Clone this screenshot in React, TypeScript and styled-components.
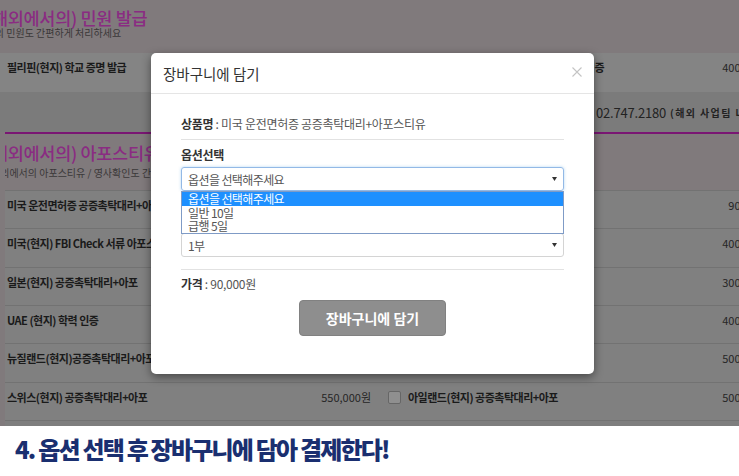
import React from "react";
import styled, { createGlobalStyle } from "styled-components";

const GlobalStyle = createGlobalStyle`
  html, body {
    margin: 0;
    padding: 0;
    background: #ffffff;
  }
  body {
    font-family: "Noto Sans CJK KR", "Noto Sans", sans-serif;
  }
`;

const Screen = styled.div`
  position: relative;
  width: 739px;
  height: 476px;
  overflow: hidden;
  background: #ffffff;
  display: flex;
  flex-direction: column;
`;

// background page (already dimmed by the modal backdrop)
const Page = styled.div`
  height: 426px;
  flex-shrink: 0;
  display: flex;
  flex-direction: column;
  background: #807a7c;
  overflow: hidden;
`;

const SectionHead = styled.div<{ $height: number; $top: number }>`
  height: ${(p) => p.$height}px;
  padding-top: ${(p) => p.$top}px;
  box-sizing: border-box;
  flex-shrink: 0;
`;

const SectionTitle = styled.div<{ $shift: number }>`
  margin-left: ${(p) => p.$shift}px;
  font-size: 17.5px;
  line-height: 18px;
  font-weight: 500;
  letter-spacing: -0.3px;
  color: #8a2c82;
  white-space: nowrap;
`;

const SectionSub = styled.div<{ $shift: number; $gap: number }>`
  margin-left: ${(p) => p.$shift}px;
  margin-top: ${(p) => p.$gap}px;
  font-size: 10px;
  line-height: 12px;
  color: #3b3839;
  white-space: nowrap;
`;

const ItemRow = styled.div<{ $shift: number; $bg: string; $height: number; $line: boolean }>`
  display: grid;
  grid-template-columns: 401px 401px;
  margin-left: ${(p) => p.$shift}px;
  height: ${(p) => p.$height}px;
  box-sizing: border-box;
  background: ${(p) => p.$bg};
  border-top: ${(p) => (p.$line ? "1px solid #727272" : "none")};
  flex-shrink: 0;
`;

const ItemCell = styled.div`
  display: flex;
  align-items: flex-start;
  padding: 7px 9px 0 8px;
  gap: 7px;
  min-width: 0;
`;

const CheckBox = styled.span`
  width: 13px;
  height: 13px;
  margin-top: 1px;
  box-sizing: border-box;
  border: 1px solid #666666;
  border-radius: 2px;
  background: #8f8f8f;
  flex-shrink: 0;
`;

const ItemName = styled.span`
  flex: 1;
  font-size: 11px;
  line-height: 15px;
  font-weight: 700;
  letter-spacing: -0.5px;
  color: #1a1a1a;
  white-space: nowrap;
  overflow: hidden;
`;

const ItemPrice = styled.span`
  font-size: 11px;
  line-height: 15px;
  color: #262626;
  white-space: nowrap;
`;

const InfoBand = styled.div`
  height: 40px;
  flex-shrink: 0;
  background: #7b7b7b;
  display: flex;
  align-items: center;
  gap: 4px;
  padding-left: 596px;
  white-space: nowrap;
`;

const Phone = styled.span`
  font-size: 13px;
  letter-spacing: -0.2px;
  color: #222222;
`;

const PhoneNote = styled.span`
  font-size: 10px;
  font-weight: 700;
  letter-spacing: 1.4px;
  color: #222222;
`;

const LowerSection = styled.div`
  flex: 1;
  margin-left: 5px;
  border-top: 2px solid #7a1673;
  display: flex;
  flex-direction: column;
  overflow: hidden;
`;

const PageFoot = styled.div`
  flex: 1;
  border-top: 1px solid #727272;
  background: #7e7e7e;
`;

const Caption = styled.div`
  flex: 1;
  display: flex;
  align-items: center;
  padding: 0 0 6px 15px;
  font-size: 24px;
  font-weight: 900;
  letter-spacing: -1.8px;
  color: #1a2f70;
`;

// modal
const Modal = styled.div`
  position: absolute;
  left: 151px;
  top: 53px;
  width: 443px;
  height: 321px;
  box-sizing: border-box;
  background: #ffffff;
  border-radius: 5px;
  box-shadow: 0 3px 10px rgba(0, 0, 0, 0.45);
  display: flex;
  flex-direction: column;
`;

const ModalHeader = styled.div`
  height: 41px;
  box-sizing: border-box;
  border-bottom: 1px solid #e5e5e5;
  display: flex;
  align-items: center;
  justify-content: space-between;
  padding: 0 12px 0 12px;
`;

const ModalTitle = styled.span`
  font-size: 14.5px;
  letter-spacing: 0px;
  color: #333333;
`;

const CloseButton = styled.svg`
  width: 10px;
  height: 10px;
  margin-top: -3px;
`;

const ModalBody = styled.div`
  padding: 23px 30px 0;
  display: flex;
  flex-direction: column;
`;

const TextLine = styled.div<{ $gap: number }>`
  margin-top: ${(p) => p.$gap}px;
  font-size: 12px;
  line-height: 14px;
  letter-spacing: -0.3px;
  color: #555555;

  b {
    color: #333333;
    font-weight: 700;
  }
`;

const Divider = styled.div<{ $gap: number }>`
  margin-top: ${(p) => p.$gap}px;
  height: 1px;
  background: #e2e2e2;
`;

const FieldLabel = styled.div<{ $top: number; $bottom: number }>`
  margin: ${(p) => p.$top}px 0 ${(p) => p.$bottom}px;
  font-size: 12px;
  line-height: 14px;
  font-weight: 700;
  letter-spacing: -0.3px;
  color: #333333;
`;

const SelectWrap = styled.div`
  position: relative;
`;

const SelectBox = styled.div<{ $focused?: boolean }>`
  height: 24px;
  box-sizing: border-box;
  border: 1px solid ${(p) => (p.$focused ? "#93b9e6" : "#d4d4d4")};
  border-radius: 3px;
  box-shadow: ${(p) => (p.$focused ? "0 0 3px rgba(102, 175, 233, 0.5)" : "none")};
  display: flex;
  align-items: center;
  justify-content: space-between;
  padding: 0 6px 0 6px;
  font-size: 12px;
  letter-spacing: -0.6px;
  color: #555555;
`;

const Caret = styled.svg`
  width: 5px;
  height: 4px;
`;

const OptionList = styled.div`
  position: absolute;
  left: 0;
  right: 0;
  top: 100%;
  z-index: 2;
  background: #ffffff;
  border: 1px solid #7f9bc6;
`;

const OptionItem = styled.div<{ $active?: boolean }>`
  height: 13.5px;
  line-height: 13.5px;
  padding-left: 6px;
  font-size: 12px;
  letter-spacing: -0.6px;
  background: ${(p) => (p.$active ? "#1e90ff" : "transparent")};
  color: ${(p) => (p.$active ? "#ffffff" : "#555555")};
`;

const CartButton = styled.button`
  align-self: center;
  margin-top: 9px;
  width: 147px;
  height: 36px;
  border: 1px solid #818181;
  border-radius: 4px;
  background: #8e8e8e;
  color: #ffffff;
  font-family: inherit;
  font-size: 14px;
  font-weight: 700;
  letter-spacing: 0px;
`;

const sectionRows = [
  ["미국 운전면허증 공증촉탁대리+아포스티유", "90,000원", "캐나다(현지) 공증촉탁대리", "90,000원"],
  ["미국(현지) FBI Check 서류 아포스티유", "400,000원", "중국(현지) 공증촉탁대리", "400,000원"],
  ["일본(현지) 공증촉탁대리+아포", "300,000원", "영국(현지) 공증촉탁대리", "300,000원"],
  ["UAE (현지) 학력 인증", "400,000원", "호주(현지) 학력 인증", "400,000원"],
  ["뉴질랜드(현지)공증촉탁대리+아포스티유", "500,000원", "독일(현지) 공증촉탁대리", "500,000원"],
  ["스위스(현지) 공증촉탁대리+아포", "550,000원", "아일랜드(현지) 공증촉탁대리+아포", "500,000원"],
];

const Arrow = () => (
  <Caret viewBox="0 0 5 4">
    <path d="M0 0h5L2.5 4z" fill="#333333" />
  </Caret>
);

const App = () => {
  return (
    <Screen>
      <GlobalStyle />
      <Page>
        <SectionHead $height={53} $top={9}>
          <SectionTitle $shift={-14}>(해외에서의) 민원 발급</SectionTitle>
          <SectionSub $shift={-42} $gap={0}>
            해외에서의 민원도 간편하게 처리하세요
          </SectionSub>
        </SectionHead>
        <ItemRow $shift={-21} $bg="#848484" $height={39} $line={false}>
          <ItemCell>
            <CheckBox />
            <ItemName>필리핀(현지) 학교 증명 발급</ItemName>
            <ItemPrice>400,000원</ItemPrice>
          </ItemCell>
          <ItemCell>
            <CheckBox />
            <ItemName>필리핀(현지)대학교 성적증명서 및 학위졸업증</ItemName>
            <ItemPrice>400,000원</ItemPrice>
          </ItemCell>
        </ItemRow>
        <InfoBand>
          <Phone>02.747.2180</Phone>
          <PhoneNote>(해외 사업팀 내선 2번)</PhoneNote>
        </InfoBand>
        <LowerSection>
          <SectionHead $height={56} $top={10}>
            <SectionTitle $shift={-19}>(해외에서의) 아포스티유 / 영사확인</SectionTitle>
            <SectionSub $shift={-14} $gap={5}>
              해외에서의 아포스티유 / 영사확인도 간편하게 처리하세요
            </SectionSub>
          </SectionHead>
          {sectionRows.map(([leftName, leftPrice, rightName, rightPrice]) => (
            <ItemRow key={leftName} $shift={-26} $bg="#808080" $height={38.33} $line>
              <ItemCell>
                <CheckBox />
                <ItemName>{leftName}</ItemName>
                <ItemPrice>{leftPrice}</ItemPrice>
              </ItemCell>
              <ItemCell>
                <CheckBox />
                <ItemName>{rightName}</ItemName>
                <ItemPrice>{rightPrice}</ItemPrice>
              </ItemCell>
            </ItemRow>
          ))}
          <PageFoot />
        </LowerSection>
      </Page>
      <Caption>4. 옵션 선택 후 장바구니에 담아 결제한다!</Caption>

      <Modal>
        <ModalHeader>
          <ModalTitle>장바구니에 담기</ModalTitle>
          <CloseButton viewBox="0 0 10 10">
            <path d="M0.5 0.5l9 9M9.5 0.5l-9 9" stroke="#c4c4c4" strokeWidth="1.1" />
          </CloseButton>
        </ModalHeader>
        <ModalBody>
          <TextLine $gap={0}>
            <b>상품명</b> : 미국 운전면허증 공증촉탁대리+아포스티유
          </TextLine>
          <Divider $gap={8} />
          <FieldLabel $top={8} $bottom={5}>
            옵션선택
          </FieldLabel>
          <SelectWrap>
            <SelectBox $focused>
              <span>옵션을 선택해주세요</span>
              <Arrow />
            </SelectBox>
            <OptionList>
              <OptionItem $active>옵션을 선택해주세요</OptionItem>
              <OptionItem>일반 10일</OptionItem>
              <OptionItem>급행 5일</OptionItem>
            </OptionList>
          </SelectWrap>
          <FieldLabel $top={14} $bottom={14}>
            수량선택
          </FieldLabel>
          <SelectBox>
            <span>1부</span>
            <Arrow />
          </SelectBox>
          <Divider $gap={12} />
          <TextLine $gap={7}>
            <b>가격</b> : 90,000원
          </TextLine>
          <CartButton>장바구니에 담기</CartButton>
        </ModalBody>
      </Modal>
    </Screen>
  );
};

export default App;
